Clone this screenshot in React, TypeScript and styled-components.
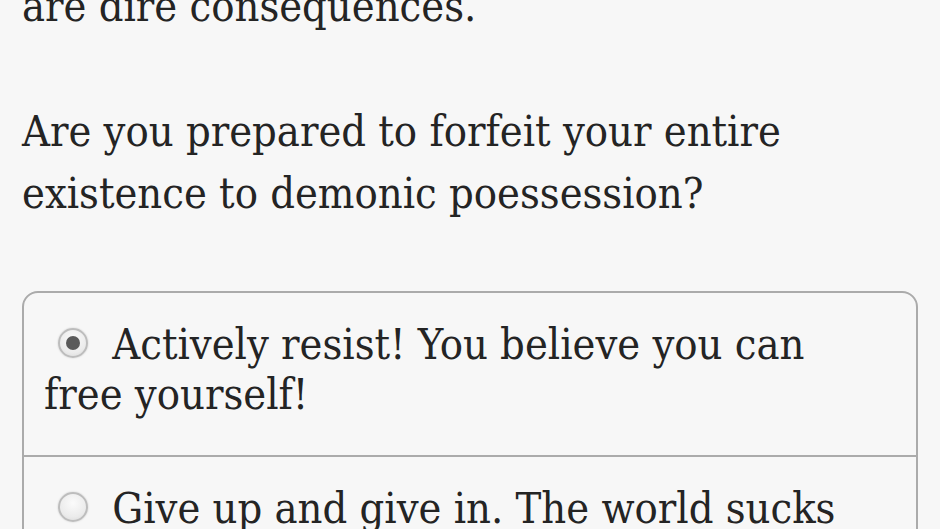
import React from "react";
import styled, { createGlobalStyle } from "styled-components";

const Global = createGlobalStyle`
  html, body { margin: 0; padding: 0; background: #f7f7f7; }
  body { overflow: hidden; }
`;

const Page = styled.div`
  width: 940px;
  height: 529px;
  overflow: hidden;
  box-sizing: border-box;
  padding: 0 22px;
  background: #f7f7f7;
  color: #242424;
  font-family: "DejaVu Serif", "Liberation Serif", serif;
  font-stretch: condensed;
  font-size: 43px;
`;

const Scroll = styled.div`
  margin-top: -25px;
`;

const Para = styled.p<{ $gap?: number }>`
  margin: 0 0 ${(p) => p.$gap ?? 63}px 0;
  line-height: 62px;
`;

const Choices = styled.div`
  border: 2px solid #ababab;
  border-radius: 16px;
  background: #f7f7f7;
`;

const Choice = styled.label<{ $last?: boolean }>`
  display: block;
  padding: 26px 40px 36px 20px;
  line-height: 50px;
  border-bottom: ${(p) => (p.$last ? "none" : "2px solid #ababab")};
`;

const Radio = styled.span<{ $checked?: boolean }>`
  display: inline-block;
  position: relative;
  width: 30px;
  height: 30px;
  margin: 0 12px 0 14px;
  border-radius: 50%;
  vertical-align: 1px;
  box-sizing: border-box;
  border: 2px solid #bdbdbd;
  background: radial-gradient(circle at 50% 35%, #fbfbfb 0%, #ebebeb 65%, #d6d6d6 100%);
  box-shadow: 0 0 2px rgba(0, 0, 0, 0.18);
  &::after {
    content: "";
    display: ${(p) => (p.$checked ? "block" : "none")};
    position: absolute;
    left: 50%;
    top: 50%;
    width: 14px;
    height: 14px;
    margin: -7px 0 0 -7px;
    border-radius: 50%;
    background: #5a5a5a;
  }
`;

export default function App() {
  return (
    <>
      <Global />
      <Page>
        <Scroll>
          <Para>are dire consequences.</Para>
          <Para $gap={67}>
            Are you prepared to forfeit your entire existence to demonic poessession?
          </Para>
          <Choices>
            <Choice>
              <Radio $checked /> Actively resist! You believe you can free yourself!
            </Choice>
            <Choice $last>
              <Radio /> Give up and give in. The world sucks anyway.
            </Choice>
          </Choices>
        </Scroll>
      </Page>
    </>
  );
}
